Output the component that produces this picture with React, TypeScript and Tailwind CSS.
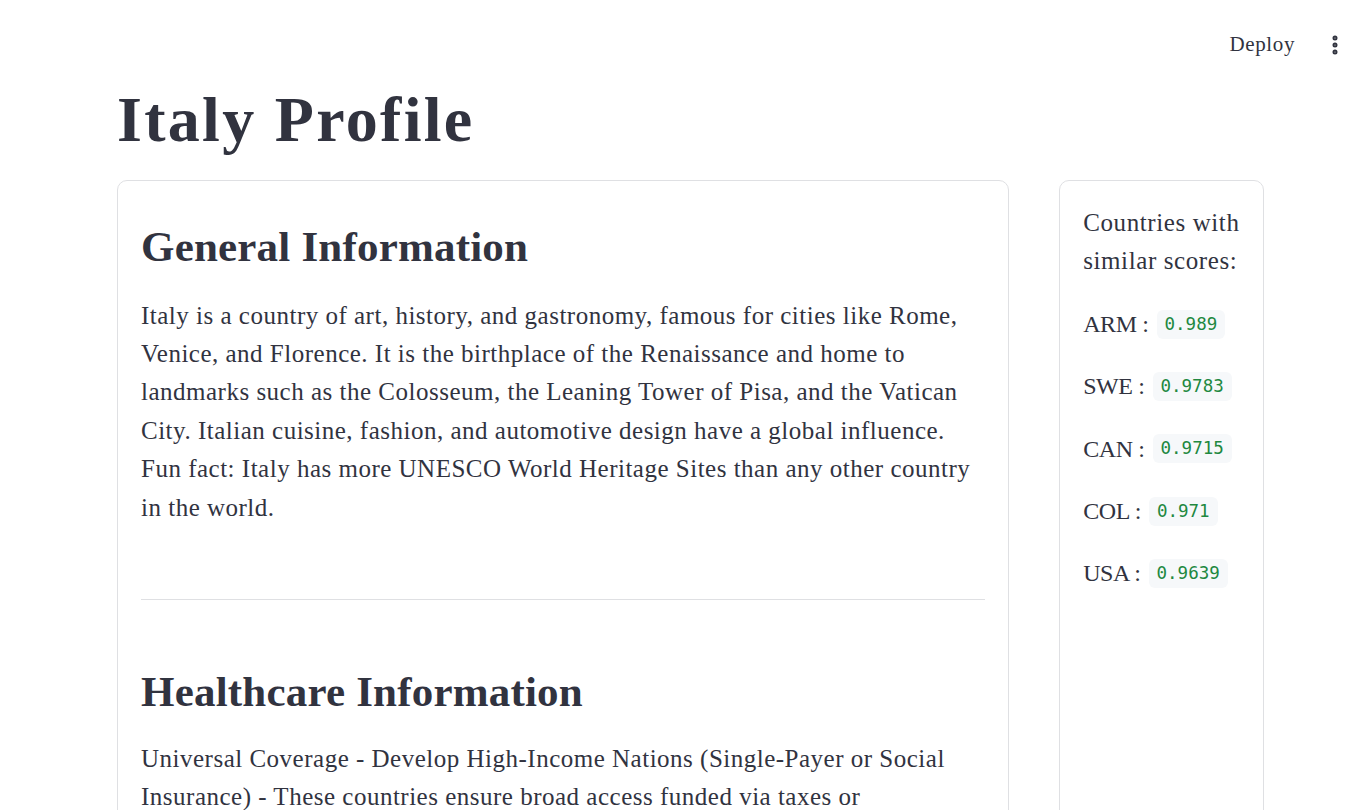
import { EllipsisVertical } from 'lucide-react';

export default function App() {
  const similar = [
    { code: 'ARM', score: '0.989' },
    { code: 'SWE', score: '0.9783' },
    { code: 'CAN', score: '0.9715' },
    { code: 'COL', score: '0.971' },
    { code: 'USA', score: '0.9639' },
  ];

  return (
    <main className="min-h-screen bg-white text-[#31333F] font-['Liberation_Serif',serif]">
      {/* Top bar */}
      <header className="h-[90px] flex items-center justify-end pr-[22px]">
        <button className="text-[21px] tracking-[0.6px] text-[#31333F] mr-[28px]">Deploy</button>
        <EllipsisVertical className="w-6 h-6 text-[#31333F]" strokeWidth={3} />
      </header>

      <div className="pl-[117px] pr-[105px]">
        <h1 className="text-[64px] font-bold leading-none tracking-[2.3px] mt-[-2px] mb-[28px]">Italy Profile</h1>

        <div className="flex gap-[50px] items-stretch">
          {/* Main card */}
          <div className="w-[893px] border border-[#dfe0e3] rounded-[10px] px-[23px] pt-[40px] pb-[40px]">
            <h2 className="text-[43px] font-semibold leading-[1.2] tracking-[0.2px] mb-[24px]">General Information</h2>
            <p className="text-[25px] leading-[38.4px] tracking-[0.5px]">
              Italy is a country of art, history, and gastronomy, famous for cities like Rome, Venice, and
              Florence. It is the birthplace of the Renaissance and home to landmarks such as the Colosseum, the
              Leaning Tower of Pisa, and the Vatican City. Italian cuisine, fashion, and automotive design have a
              global influence. Fun fact: Italy has more UNESCO World Heritage Sites than any other country in the
              world.
            </p>

            <hr className="border-t border-[#dfe0e3] mt-[72px] mb-[66px]" />

            <h2 className="text-[43px] font-semibold leading-[1.2] tracking-[0.2px] mb-[22px]">Healthcare Information</h2>
            <p className="text-[25px] leading-[38.4px] tracking-[0.5px]">
              Universal Coverage - Develop High-Income Nations (Single-Payer or Social Insurance) - These countries
              ensure broad access funded via taxes or contributions from employers and employees.
            </p>
          </div>

          {/* Side card */}
          <div className="w-[205px] border border-[#dfe0e3] rounded-[10px] pl-[23px] pr-[6px] pt-[23px]">
            <p className="text-[25px] leading-[38.4px] tracking-[0.6px] mb-[24px]">Countries with similar scores:</p>
            {similar.map((s) => (
              <p key={s.code} className="text-[24px] leading-[38.4px] tracking-[-0.4px] mb-[24px] flex items-center">
                <span>{s.code} :</span>
                <code className="ml-[8px] bg-[#f6f8fa] text-[#21883f] rounded-[6px] px-[8px] py-[3px] text-[17.5px] tracking-normal leading-[23px] font-['DejaVu_Sans_Mono',monospace]">
                  {s.score}
                </code>
              </p>
            ))}
          </div>
        </div>
      </div>
    </main>
  );
}
